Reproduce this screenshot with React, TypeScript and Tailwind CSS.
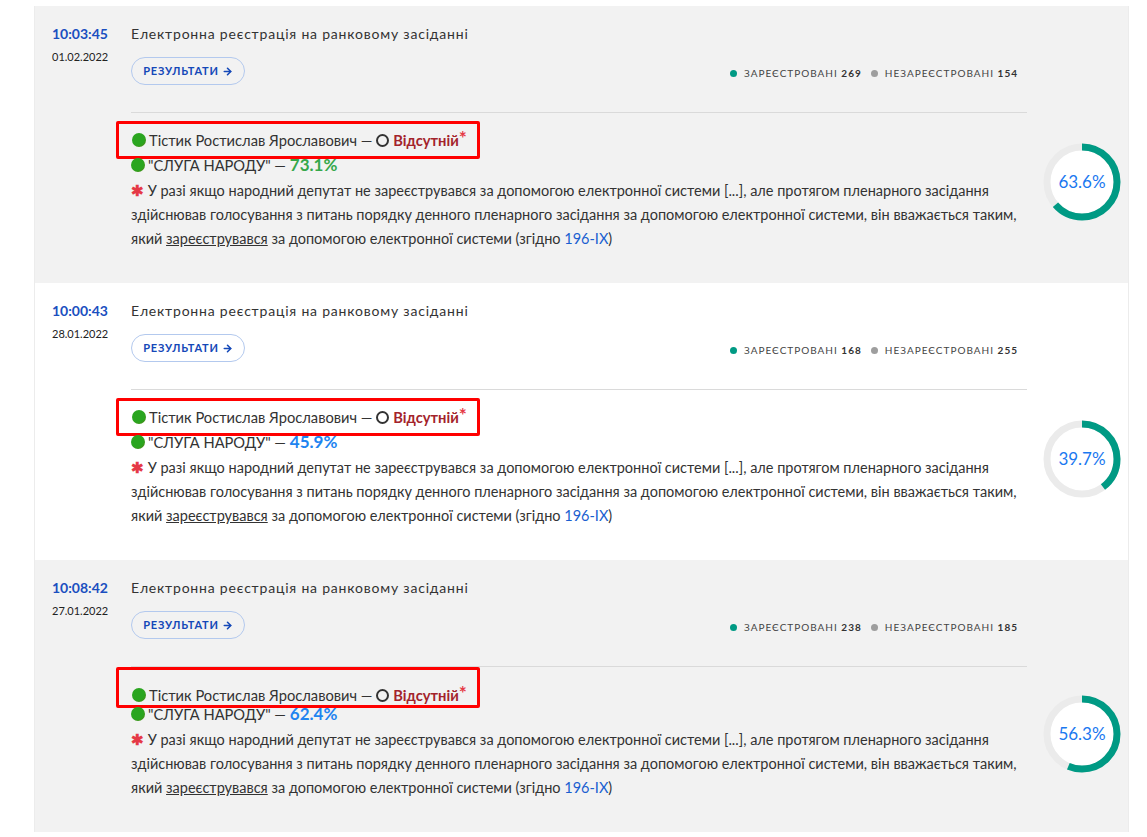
import { ArrowRight } from 'lucide-react';

type Entry = {
  time: string;
  date: string;
  registered: number;
  unregistered: number;
  party: string;
  partyColor: string;
  percent: number;
  bg: string;
  tallBox?: boolean;
};

const ENTRIES: Entry[] = [
  {
    time: '10:03:45',
    date: '01.02.2022',
    registered: 269,
    unregistered: 154,
    party: '73.1%',
    partyColor: 'text-[#35a84a]',
    percent: 63.6,
    bg: 'bg-[#f2f2f2]',
  },
  {
    time: '10:00:43',
    date: '28.01.2022',
    registered: 168,
    unregistered: 255,
    party: '45.9%',
    partyColor: 'text-[#1e84f0]',
    percent: 39.7,
    bg: 'bg-white',
  },
  {
    time: '10:08:42',
    date: '27.01.2022',
    registered: 238,
    unregistered: 185,
    party: '62.4%',
    partyColor: 'text-[#1e84f0]',
    percent: 56.3,
    bg: 'bg-[#f2f2f2]',
    tallBox: true,
  },
];

function GreenDot() {
  return (
    <span className="inline-block w-[14px] h-[14px] rounded-full bg-[radial-gradient(circle_at_40%_40%,#2aa51f_55%,#5b7a10_100%)] mr-[3px] shrink-0" />
  );
}

function Ring({ value }: { value: number }) {
  const r = 35;
  const c = 2 * Math.PI * r;
  return (
    <div className="relative w-[78px] h-[78px] shrink-0">
      <svg width="78" height="78" viewBox="0 0 78 78" className="-rotate-90">
        <circle cx="39" cy="39" r={r} fill="#ffffff" stroke="#ebebeb" strokeWidth="7" />
        <circle
          cx="39"
          cy="39"
          r={r}
          fill="none"
          stroke="#009a84"
          strokeWidth="7"
          strokeDasharray={`${(c * value) / 100} ${c}`}
        />
      </svg>
      <span className="absolute inset-0 flex items-center justify-center text-[17px] text-[#1a78f0]">
        {value}%
      </span>
    </div>
  );
}

function Row({ e }: { e: Entry }) {
  return (
    <div className={`flex ${e.bg} pl-[17px] pr-[9px] pt-[18px] pb-[32px]`}>
      <div className="w-[79px] shrink-0">
        <div className="h-[20px] leading-[20px] text-[14px] font-bold text-[#1a4fc0]">{e.time}</div>
        <div className="mt-[5px] h-[16px] leading-[16px] text-[11px] text-[#222]">{e.date}</div>
      </div>
      <div className="flex-1">
        <div className="w-[896px]">
          <div className="h-[20px] leading-[20px] text-[14px] tracking-[0.8px] text-[#333]">
            Електронна реєстрація на ранковому засіданні
          </div>
          <div className="mt-[13px] flex items-center justify-between pr-[9px]">
            <button className="h-[28px] w-[114px] rounded-full border border-[#b3c9ee] flex items-center justify-center gap-[3px] text-[11px] font-bold tracking-[0.8px] text-[#1448b8]">
              РЕЗУЛЬТАТИ
              <ArrowRight size={11} strokeWidth={3.5} />
            </button>
            <div className="flex items-center pt-[4px] text-[10px] tracking-[1px] text-[#444]">
              <span className="w-[7px] h-[7px] rounded-full bg-[#009a84] mr-[7px]" />
              ЗАРЕЄСТРОВАНІ&nbsp;<b className="text-[#333]">{e.registered}</b>
              <span className="w-[7px] h-[7px] rounded-full bg-[#9e9e9e] ml-[9px] mr-[7px]" />
              НЕЗАРЕЄСТРОВАНІ&nbsp;<b className="text-[#333]">{e.unregistered}</b>
            </div>
          </div>
          <div className="mt-[27px] border-t border-[#dadada]" />
        </div>
        <div className="flex items-center">
          <div className="w-[896px]">
            <div
              className={`-ml-[15px] w-fit flex border-[3px] border-[#ff0000] rounded-[2px] pl-[13px] pr-[10px] ${
                e.tallBox ? 'mt-0 h-[41px] items-end pb-0' : 'mt-[8px] h-[38px] items-center'
              }`}
            >
              <div className="flex items-center h-[20px] text-[14.7px] text-[#333]">
                <GreenDot />
                Тістик Ростислав Ярославович —&nbsp;
                <span className="inline-block w-[13px] h-[13px] rounded-full border-[2px] border-[#333] mr-[4px]" />
                <span className="font-bold text-[#a3232b]">Відсутній</span>
                <span className="text-[#e53946] font-bold text-[19px] leading-[12px] self-start mt-[2px]">*</span>
              </div>
            </div>
            <div className="-mt-[4px] flex items-center h-[20px] text-[14.7px] text-[#333]">
              <GreenDot />
              "СЛУГА НАРОДУ" —&nbsp;
              <span className={`text-[17px] font-bold ${e.partyColor}`}>{e.party}</span>
            </div>
            <p className="mt-[3px] text-[14.5px] leading-[24px] text-[#333]">
              <span className="text-[#e53946] text-[15px] font-bold">✱</span> У разі якщо народний депутат
              не зареєструвався за допомогою електронної системи [...], але протягом пленарного засідання
              здійснював голосування з питань порядку денного пленарного засідання за допомогою електронної
              системи, він вважається таким, який <span className="underline">зареєструвався</span> за
              допомогою електронної системи (згідно <span className="text-[#1a5fd0]">196-IX</span>)
            </p>
          </div>
          <div className="ml-[16px]">
            <Ring value={e.percent} />
          </div>
        </div>
      </div>
    </div>
  );
}

export default function App() {
  return (
    <div className="min-h-screen bg-white pt-[6px] font-['Lato','Noto_Sans',sans-serif]">
      <div className="ml-[34px] w-[1095px] border-x border-[#ececec]">
        {ENTRIES.map((e) => (
          <Row key={e.time} e={e} />
        ))}
      </div>
    </div>
  );
}
